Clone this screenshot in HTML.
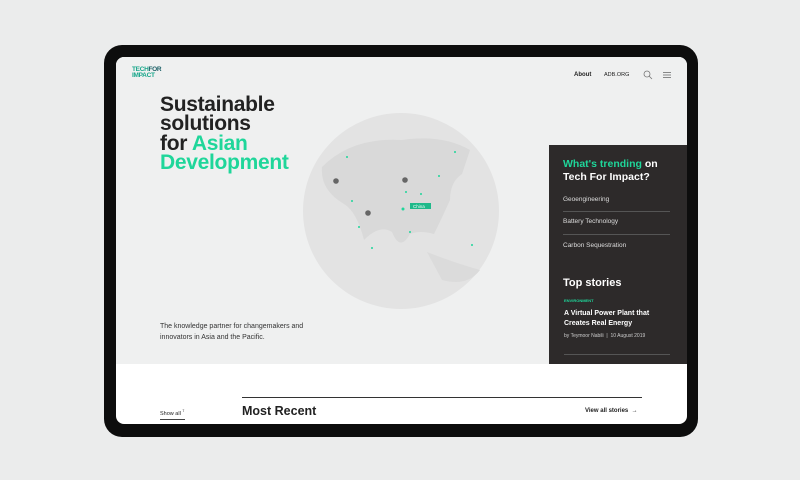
<!DOCTYPE html>
<html><head><meta charset="utf-8"><style>
*{margin:0;padding:0;box-sizing:border-box}
body{width:800px;height:480px;background:#ebecec;position:relative;overflow:hidden;font-family:"Liberation Sans",sans-serif}
.frame{position:absolute;left:104px;top:45px;width:594px;height:392px;background:#0d0d0d;border-radius:18px}
.screen{position:absolute;left:116px;top:57px;width:571px;height:367px;background:#fff;border-radius:8px;overflow:hidden}
.hero{position:absolute;left:0;top:0;width:571px;height:307px;background:#eff0f0}
.abs{position:absolute}
.g{color:#1fd69a}
</style></head><body>
<div class="frame"></div>
<div class="screen">
 <div class="hero"></div>
 <div class="abs" style="left:16px;top:10px;font-size:6.5px;font-weight:bold;line-height:5.5px;color:#17a68a;letter-spacing:-0.3px">TECH<span style="color:#1b5f66">FOR</span><br>IMPACT</div>
 <div class="abs" style="left:458px;top:15px;font-size:6px;color:#222;font-weight:bold">About</div>
 <div class="abs" style="left:488px;top:15px;font-size:5.5px;color:#222">ADB.ORG</div>
 <svg class="abs" style="left:527px;top:13px" width="10" height="10"><circle cx="4" cy="4" r="3" fill="none" stroke="#777" stroke-width="0.8"/><line x1="6.2" y1="6.2" x2="9" y2="9" stroke="#777" stroke-width="0.8"/></svg>
 <svg class="abs" style="left:546px;top:14px" width="10" height="8"><path d="M1 1.5H9M1 4H9M1 6.5H9" stroke="#666" stroke-width="0.8"/></svg>
 <div class="abs" style="left:44px;top:38px;font-size:21px;line-height:19.3px;color:#222;font-weight:bold;letter-spacing:-0.3px">Sustainable<br>solutions<br>for <span class="g">Asian</span><br><span class="g">Development</span></div>
 <svg class="abs" style="left:186px;top:55px" width="198" height="198">
  <circle cx="99" cy="99" r="98" fill="#e3e3e3"/>
  <path d="M20 55 Q50 25 100 28 Q140 22 168 38 L160 62 Q148 70 148 88 Q138 110 132 122 Q118 118 108 122 Q98 140 90 120 Q78 112 62 128 Q55 100 42 92 Q18 78 20 55Z" fill="#d9d9d9"/>
  <path d="M125 140 Q150 150 178 158 Q165 175 140 168Z" fill="#dbdbdb"/>
  <g fill="#1fd69a"><circle cx="45" cy="45" r="1"/><circle cx="153" cy="40" r="1"/><circle cx="137" cy="64" r="1"/><circle cx="50" cy="89" r="1"/><circle cx="104" cy="80" r="1"/><circle cx="119" cy="82" r="1"/><circle cx="57" cy="115" r="1"/><circle cx="108" cy="120" r="1"/><circle cx="70" cy="136" r="1"/><circle cx="170" cy="133" r="1"/><circle cx="101" cy="97" r="1.5"/></g>
  <g fill="#666"><circle cx="34" cy="69" r="2.8"/><circle cx="103" cy="68" r="2.8"/><circle cx="66" cy="101" r="2.8"/></g>
  <rect x="108" y="91" width="21" height="6" fill="#1fb98a"/><text x="111" y="96" font-size="4.5" fill="#fff" font-family="Liberation Sans">China</text>
 </svg>
 <div class="abs" style="left:44px;top:265px;font-size:7px;line-height:10.5px;color:#333">The knowledge partner for changemakers and<br>innovators in Asia and the Pacific.</div>
 <div class="abs" style="left:433px;top:88px;width:138px;height:219px;background:#2d2a2a;color:#fff">
  <div class="abs" style="left:14px;top:13px;font-size:10.5px;line-height:13px;font-weight:bold;width:120px"><span class="g">What's trending</span> on Tech For Impact?</div>
  <div class="abs" style="left:14px;top:51px;font-size:6.5px;color:#ddd">Geoengineering</div>
  <div class="abs" style="left:14px;top:66px;width:107px;border-top:1px solid #555"></div>
  <div class="abs" style="left:14px;top:73px;font-size:6.5px;color:#ddd">Battery Technology</div>
  <div class="abs" style="left:14px;top:89px;width:107px;border-top:1px solid #555"></div>
  <div class="abs" style="left:14px;top:97px;font-size:6.5px;color:#ddd">Carbon Sequestration</div>
  <div class="abs" style="left:14px;top:132px;font-size:11px;font-weight:bold">Top stories</div>
  <div class="abs" style="left:15px;top:153px;font-size:4px;color:#1fd69a;font-weight:bold">ENVIRONMENT</div>
  <div class="abs" style="left:15px;top:164px;font-size:7px;line-height:9.5px;font-weight:bold">A Virtual Power Plant that<br>Creates Real Energy</div>
  <div class="abs" style="left:15px;top:188px;font-size:5px;color:#ccc">by Teymoor Nabili &nbsp;| &nbsp;10 August 2019</div>
  <div class="abs" style="left:15px;top:209px;width:106px;border-top:1px solid #555"></div>
 </div>
 <div class="abs" style="left:44px;top:352px;font-size:5.5px;color:#222">Show all <sup style="font-size:3.5px">7</sup></div>
 <div class="abs" style="left:44px;top:362px;width:25px;border-top:1px solid #444"></div>
 <div class="abs" style="left:126px;top:340px;width:400px;border-top:1.3px solid #333"></div>
 <div class="abs" style="left:126px;top:347px;font-size:12.5px;color:#222;font-weight:bold">Most Recent</div>
 <div class="abs" style="left:469px;top:351px;font-size:6px;color:#222;font-weight:bold">View all stories &nbsp;<span style="font-weight:normal">→</span></div>
</div>
</body></html>
